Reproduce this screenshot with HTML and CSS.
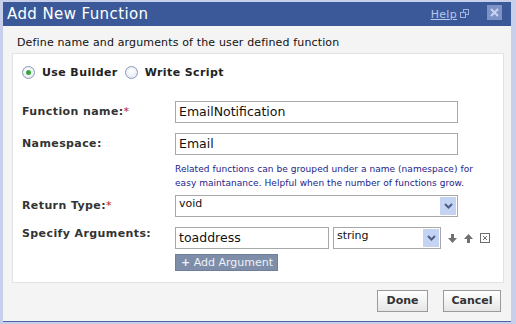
FILE: index.html
```html
<!DOCTYPE html>
<html>
<head>
<meta charset="utf-8">
<link rel="stylesheet" href="styles.css">
</head>
<body>
<div class="dialog">
  <div class="titlebar">
    <span class="title">Add New Function</span>
    <div class="title-tools">
      <a class="help">Help</a>
      <svg class="popup" width="9" height="9" viewBox="0 0 9 9"><rect x="3.5" y="0.5" width="5" height="5" fill="none" stroke="#9fb2e0"/><rect x="0.5" y="3.5" width="5" height="5" fill="#3b5998" stroke="#9fb2e0"/></svg>
      <span class="close"><svg width="9" height="9" viewBox="0 0 9 9"><path d="M1 1L8 8M8 1L1 8" stroke="#c8d4f0" stroke-width="2"/></svg></span>
    </div>
  </div>
  <div class="desc">Define name and arguments of the user defined function</div>
  <div class="panel">
    <div class="mode">
      <span class="radio checked"></span><span class="mode-label">Use Builder</span>
      <span class="radio"></span><span class="mode-label">Write Script</span>
    </div>
    <div class="form">
      <div class="label mid">Function name:<span class="req">*</span></div>
      <div class="field"><div class="input wide">EmailNotification</div></div>

      <div class="label mid">Namespace:</div>
      <div class="field">
        <div class="input wide">Email</div>
        <div class="hint">Related functions can be grouped under a name (namespace) for<br>easy maintanance. Helpful when the number of functions grow.</div>
      </div>

      <div class="label mid">Return Type:<span class="req">*</span></div>
      <div class="field"><div class="select wide"><span class="sel-text">void</span><span class="sel-btn"><svg width="9" height="6" viewBox="0 0 9 6"><path d="M1 1L4.5 4.5L8 1" fill="none" stroke="#4a5f8a" stroke-width="2"/></svg></span></div></div>

      <div class="label top">Specify Arguments:</div>
      <div class="field">
        <div class="arg-row">
          <div class="input arg">toaddress</div>
          <div class="select type"><span class="sel-text">string</span><span class="sel-btn"><svg width="9" height="6" viewBox="0 0 9 6"><path d="M1 1L4.5 4.5L8 1" fill="none" stroke="#4a5f8a" stroke-width="2"/></svg></span></div>
          <svg class="ico down" width="9" height="9" viewBox="0 0 9 9"><path d="M3 0H6V4H9L4.5 9L0 4H3Z" fill="#707070"/></svg>
          <svg class="ico up" width="9" height="9" viewBox="0 0 9 9"><path d="M3 9H6V5H9L4.5 0L0 5H3Z" fill="#707070"/></svg>
          <svg class="ico del" width="10" height="10" viewBox="0 0 10 10"><rect x="0.5" y="0.5" width="9" height="9" fill="#fff" stroke="#6f6f6f"/><path d="M3 3L7 7M7 3L3 7" stroke="#6f6f6f"/></svg>
        </div>
        <div class="add-btn"><span class="plus">+</span> Add Argument</div>
      </div>
    </div>
  </div>
  <div class="footer">
    <div class="btn done">Done</div>
    <div class="btn cancel">Cancel</div>
  </div>
</div>
</body>
</html>
```

FILE: styles.css
```css
html, body {
  margin: 0;
  padding: 0;
}
body {
  background: #c7cfeb;
  font-family: "DejaVu Sans", Verdana, sans-serif;
  width: 516px;
  height: 324px;
  overflow: hidden;
}
.dialog {
  margin: 2px 5px 0 3px;
  height: 319px;
  background: #f4f4f4;
  border-bottom: 1px solid #4a64a8;
  display: flex;
  flex-direction: column;
}
.titlebar {
  height: 24px;
  background: #3b5998;
  display: flex;
  align-items: center;
  justify-content: space-between;
  padding: 0 9px 0 4px;
  flex-shrink: 0;
}
.title {
  color: #ffffff;
  font-size: 15px;
  letter-spacing: 0.4px;
}
.title-tools {
  display: flex;
  align-items: center;
}
.help {
  color: #b9c8ef;
  font-size: 11px;
  text-decoration: underline;
  margin-right: 3px;
  letter-spacing: 0.3px;
}
.popup {
  margin-right: 18px;
  margin-top: -2px;
}
.close {
  width: 15px;
  height: 15px;
  background: #7d93c6;
  display: flex;
  align-items: center;
  justify-content: center;
  margin-top: -3px;
}
.desc {
  height: 27px;
  box-sizing: border-box;
  padding: 10px 0 0 14px;
  font-size: 11px;
  color: #111;
  letter-spacing: 0.15px;
  flex-shrink: 0;
}
.panel {
  margin: 0 7px 0 9px;
  height: 230px;
  box-sizing: border-box;
  background: #ffffff;
  border: 1px solid #e2e2e2;
  padding: 9px 0 0 9px;
  flex-shrink: 0;
}
.mode {
  display: flex;
  align-items: center;
  height: 18px;
}
.radio {
  width: 11px;
  height: 11px;
  border-radius: 50%;
  border: 1px solid #8a9ab8;
  background: radial-gradient(circle at 50% 40%, #ffffff, #dfe5ee);
  margin-right: 7px;
  position: relative;
  box-sizing: content-box;
}
.radio.checked::after {
  content: "";
  position: absolute;
  left: 3px;
  top: 3px;
  width: 5px;
  height: 5px;
  border-radius: 50%;
  background: #3aa33a;
}
.mode-label {
  font-weight: bold;
  font-size: 11px;
  color: #222;
  margin-right: 7px;
  letter-spacing: 0.4px;
}
.form {
  display: grid;
  grid-template-columns: 153px 1fr;
  margin-top: 20px;
  row-gap: 10px;
}
.label {
  font-weight: bold;
  font-size: 11px;
  color: #333;
  height: 22px;
  line-height: 22px;
  letter-spacing: 0.4px;
}
.label.top {
  line-height: 14px;
}
.req {
  color: #b41c1c;
  font-weight: normal;
}
.field {
  display: flex;
  flex-direction: column;
}
.input {
  height: 22px;
  box-sizing: border-box;
  border: 1px solid #a8a8a8;
  background: #fff;
  font-size: 12.5px;
  line-height: 20px;
  padding-left: 3px;
  color: #111;
}
.wide {
  width: 283px;
}
.hint {
  color: #1c1c8c;
  font-size: 9px;
  line-height: 14px;
  margin-top: 7px;
  margin-bottom: -5px;
  white-space: nowrap;
  letter-spacing: 0.05px;
}
.select {
  height: 22px;
  box-sizing: border-box;
  border: 1px solid #a8a8a8;
  background: #fff;
  display: flex;
  justify-content: space-between;
  padding: 1px;
}
.sel-text {
  font-size: 11px;
  padding-left: 2px;
  line-height: 14px;
  color: #111;
}
.sel-btn {
  width: 16px;
  background: #c5d3f2;
  display: flex;
  align-items: center;
  justify-content: center;
}
.arg-row {
  display: flex;
  align-items: center;
}
.arg {
  width: 154px;
}
.type {
  width: 108px;
  margin-left: 4px;
}
.ico.down {
  margin-left: 7px;
}
.ico.up {
  margin-left: 7px;
}
.ico.del {
  margin-left: 7px;
}
.add-btn {
  margin-top: 5px;
  width: 103px;
  height: 17px;
  box-sizing: border-box;
  background: #7e8ea8;
  border: 1px solid #6e7f9c;
  color: #eef2fa;
  font-size: 11px;
  line-height: 15px;
  padding-left: 5px;
  white-space: nowrap;
  overflow: hidden;
}
.plus {
  font-weight: bold;
}
.footer {
  display: flex;
  justify-content: flex-end;
  gap: 15px;
  padding: 7px 10px 0 0;
}
.btn {
  height: 22px;
  box-sizing: border-box;
  border: 1px solid #9a9a9a;
  background: linear-gradient(#ffffff, #e6e6e6);
  font-size: 11px;
  font-weight: bold;
  color: #333;
  line-height: 20px;
  text-align: center;
}
.done {
  width: 51px;
}
.cancel {
  width: 58px;
}
```
